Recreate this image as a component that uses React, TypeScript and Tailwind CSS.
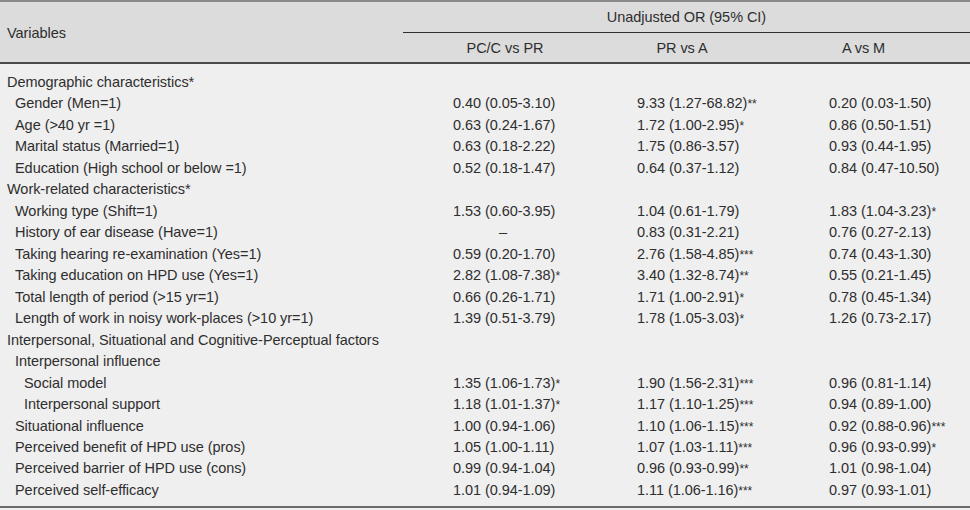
import React from 'react';

type Row = {
    label: string;
    indent: 0 | 1 | 2;
    values?: [string, string, string];
};

// value strings: trailing asterisks become superscript
const ROWS: Row[] = [
    { label: 'Demographic characteristics*', indent: 0 },
    { label: 'Gender (Men=1)', indent: 1, values: ['0.40 (0.05-3.10)', '9.33 (1.27-68.82)**', '0.20 (0.03-1.50)'] },
    { label: 'Age (>40 yr =1)', indent: 1, values: ['0.63 (0.24-1.67)', '1.72 (1.00-2.95)*', '0.86 (0.50-1.51)'] },
    { label: 'Marital status (Married=1)', indent: 1, values: ['0.63 (0.18-2.22)', '1.75 (0.86-3.57)', '0.93 (0.44-1.95)'] },
    { label: 'Education (High school or below =1)', indent: 1, values: ['0.52 (0.18-1.47)', '0.64 (0.37-1.12)', '0.84 (0.47-10.50)'] },
    { label: 'Work-related characteristics*', indent: 0 },
    { label: 'Working type (Shift=1)', indent: 1, values: ['1.53 (0.60-3.95)', '1.04 (0.61-1.79)', '1.83 (1.04-3.23)*'] },
    { label: 'History of ear disease (Have=1)', indent: 1, values: ['–', '0.83 (0.31-2.21)', '0.76 (0.27-2.13)'] },
    { label: 'Taking hearing re-examination (Yes=1)', indent: 1, values: ['0.59 (0.20-1.70)', '2.76 (1.58-4.85)***', '0.74 (0.43-1.30)'] },
    { label: 'Taking education on HPD use (Yes=1)', indent: 1, values: ['2.82 (1.08-7.38)*', '3.40 (1.32-8.74)**', '0.55 (0.21-1.45)'] },
    { label: 'Total length of period (>15 yr=1)', indent: 1, values: ['0.66 (0.26-1.71)', '1.71 (1.00-2.91)*', '0.78 (0.45-1.34)'] },
    { label: 'Length of work in noisy work-places (>10 yr=1)', indent: 1, values: ['1.39 (0.51-3.79)', '1.78 (1.05-3.03)*', '1.26 (0.73-2.17)'] },
    { label: 'Interpersonal, Situational and Cognitive-Perceptual factors', indent: 0 },
    { label: 'Interpersonal influence', indent: 1 },
    { label: 'Social model', indent: 2, values: ['1.35 (1.06-1.73)*', '1.90 (1.56-2.31)***', '0.96 (0.81-1.14)'] },
    { label: 'Interpersonal support', indent: 2, values: ['1.18 (1.01-1.37)*', '1.17 (1.10-1.25)***', '0.94 (0.89-1.00)'] },
    { label: 'Situational influence', indent: 1, values: ['1.00 (0.94-1.06)', '1.10 (1.06-1.15)***', '0.92 (0.88-0.96)***'] },
    { label: 'Perceived benefit of HPD use (pros)', indent: 1, values: ['1.05 (1.00-1.11)', '1.07 (1.03-1.11)***', '0.96 (0.93-0.99)*'] },
    { label: 'Perceived barrier of HPD use (cons)', indent: 1, values: ['0.99 (0.94-1.04)', '0.96 (0.93-0.99)**', '1.01 (0.98-1.04)'] },
    { label: 'Perceived self-efficacy', indent: 1, values: ['1.01 (0.94-1.09)', '1.11 (1.06-1.16)***', '0.97 (0.93-1.01)'] },
];

function Stars({ text }: { text: string }) {
    const m = text.match(/^(.*?)(\*+)$/);
    if (!m) return <>{text}</>;
    return (
        <>
            {m[1]}
            <sup className="text-[12px] relative top-[0px]">{m[2]}</sup>
        </>
    );
}

const INDENT = ['pl-[7px]', 'pl-[15px]', 'pl-[24px]'];

export default function App() {
    return (
        <div
            className="w-[970px] h-[510px] bg-[#efefef] text-[#2e2e2e] text-[14.5px] tracking-[-0.05px] overflow-hidden"
            style={{ fontFamily: '"Liberation Sans", Arial, sans-serif' }}
        >
            {/* Header */}
            <div className="bg-[#dcdcdc] border-t-2 border-t-[#8a8a8a] border-b-2 border-b-[#4a4a4a] h-[64px] grid grid-cols-[403px_204px_150px_1fr] grid-rows-[31px_31px]">
                <div className="row-span-2 flex items-center pl-[7px] pt-[1px]">Variables</div>
                <div className="col-span-3 flex items-center justify-center border-b-[1.5px] border-b-[#2e2e2e] pt-[1px]">
                    Unadjusted OR (95% CI)
                </div>
                <div className="flex items-center justify-center">PC/C vs PR</div>
                <div className="flex items-center justify-center">PR vs A</div>
                <div className="flex items-center justify-center">A vs M</div>
            </div>

            {/* Body */}
            <div className="pt-[8px] border-b-2 border-b-[#6a6a6a] h-[444px]">
                {ROWS.map((r) => (
                    <div key={r.label} className="grid grid-cols-[403px_204px_150px_1fr] h-[21.47px] items-center">
                        <div className={INDENT[r.indent]}>{r.label}</div>
                        {r.values ? (
                            <>
                                <div className={r.values[0] === '–' ? 'pl-[96px]' : 'pl-[50px]'}>
                                    <Stars text={r.values[0]} />
                                </div>
                                <div className="pl-[30px]">
                                    <Stars text={r.values[1]} />
                                </div>
                                <div className="pl-[72px]">
                                    <Stars text={r.values[2]} />
                                </div>
                            </>
                        ) : null}
                    </div>
                ))}
            </div>
        </div>
    );
}
